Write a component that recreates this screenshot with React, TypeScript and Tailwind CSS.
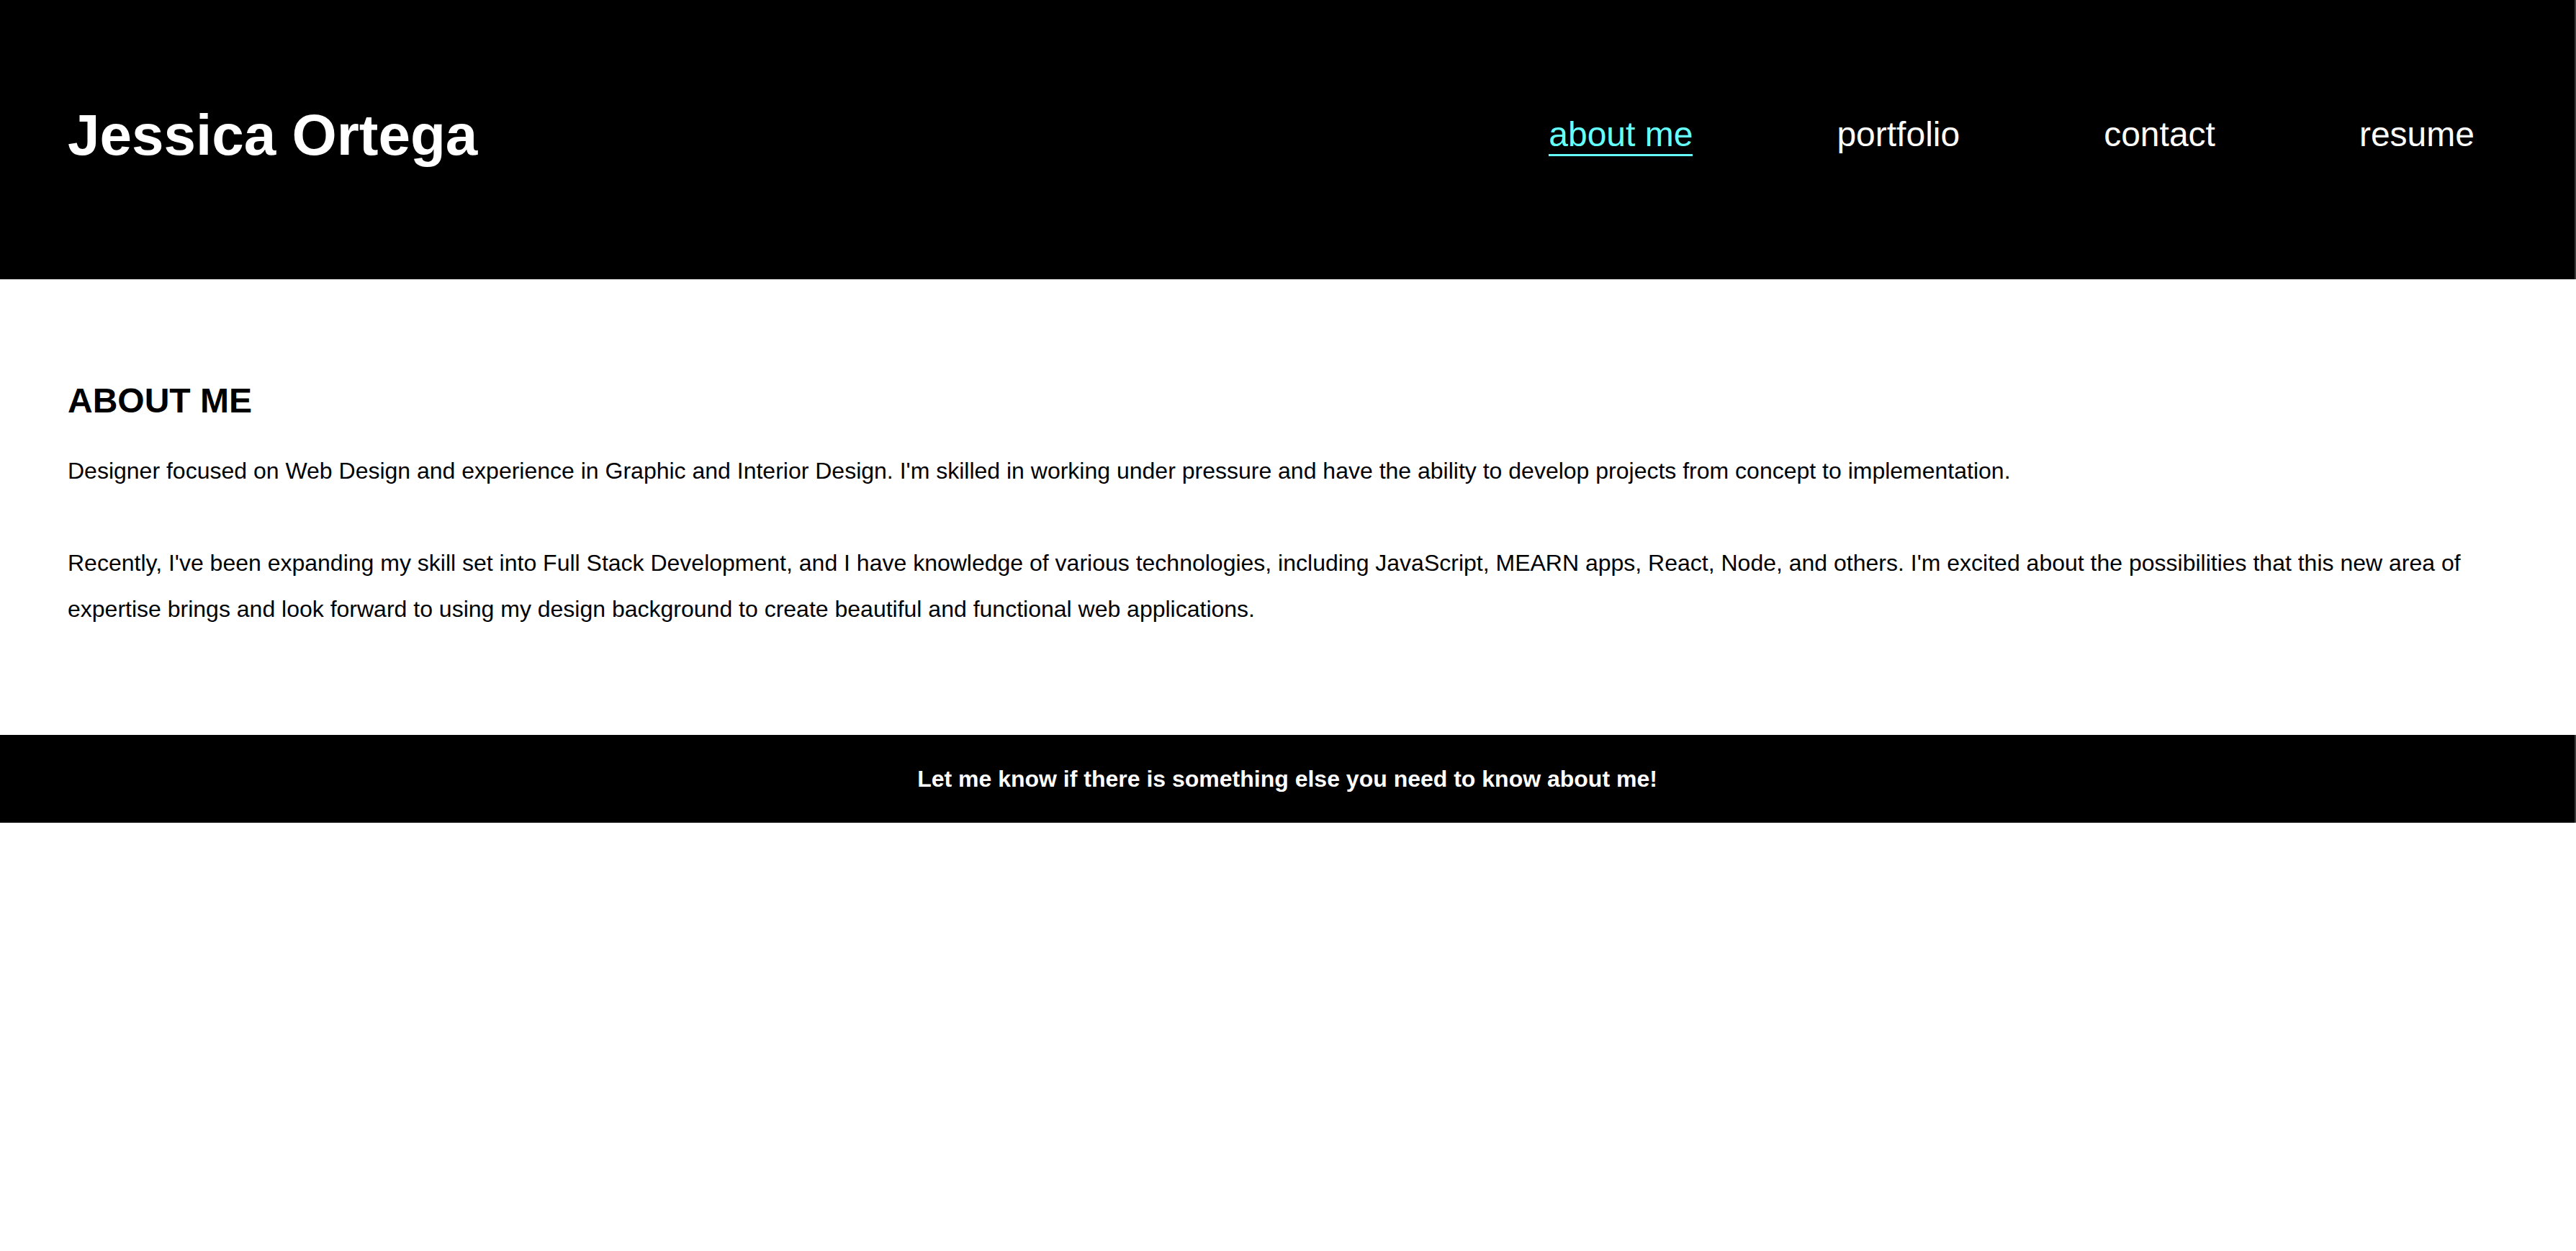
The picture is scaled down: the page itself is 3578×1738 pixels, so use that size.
import React from "react";

export default function App() {
  const links = [
    { label: "about me", active: true },
    { label: "portfolio", active: false },
    { label: "contact", active: false },
    { label: "resume", active: false },
  ];
  return (
    <div
      className="min-h-[1738px] w-full bg-white text-black"
      style={{ fontFamily: '"Liberation Sans", Arial, sans-serif' }}
    >
      <header className="flex h-[388px] items-center justify-between border-r-2 border-[#3a3a3a] bg-black pb-[12px] pl-[94px] pr-[139px]">
        <h1 className="text-[80px] font-bold leading-[92px] text-white">Jessica Ortega</h1>
        <nav className="flex items-center gap-[200px]">
          {links.map((l) => (
            <a
              key={l.label}
              href="#"
              className={
                l.active
                  ? "border-b-[3px] border-[#66ffff] text-[48px] leading-[55px] text-[#66ffff]"
                  : "border-b-[3px] border-transparent text-[48px] leading-[55px] text-white"
              }
            >
              {l.label}
            </a>
          ))}
        </nav>
      </header>
      <main className="pb-[143px] pl-[94px] pr-[92px] pt-[141px]">
        <h2 className="mb-[38px] text-[48px] font-bold leading-[55px]">ABOUT ME</h2>
        <p className="text-[32px] leading-[64px]">
          Designer focused on Web Design and experience in Graphic and Interior Design. I'm skilled in working under pressure and have the ability to develop projects from concept to implementation.
        </p>
        <p className="mt-[64px] text-[32px] leading-[64px]">
          Recently, I've been expanding my skill set into Full Stack Development, and I have knowledge of various technologies, including JavaScript, MEARN apps, React, Node, and others. I'm excited about the possibilities that this new area of expertise brings and look forward to using my design background to create beautiful and functional web applications.
        </p>
      </main>
      <footer className="flex h-[122px] items-center justify-center border-r-2 border-[#3a3a3a] bg-black">
        <p className="text-[32px] font-bold text-white">
          Let me know if there is something else you need to know about me!
        </p>
      </footer>
    </div>
  );
}
